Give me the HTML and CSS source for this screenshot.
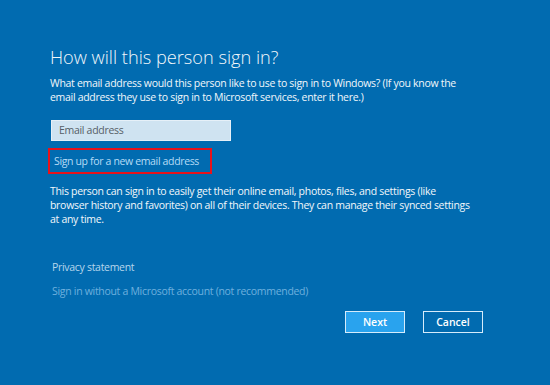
FILE: index.html
```html
<!DOCTYPE html>
<html>
<head>
<meta charset="utf-8">
<link rel="stylesheet" href="styles.css">
</head>
<body>
<div class="page">
  <h1 class="title">How will this person sign in?</h1>
  <p class="intro">What email address would this person like to use to sign in to Windows? (If you know the<br>email address they use to sign in to Microsoft services, enter it here.)</p>
  <div class="input">Email address</div>
  <div class="signup"><span class="link">Sign up for a new email address</span></div>
  <p class="info">This person can sign in to easily get their online email, photos, files, and settings (like browser history and favorites) on all of their devices. They can manage their synced settings at any time.</p>
  <div class="privacy">Privacy statement</div>
  <div class="without">Sign in without a Microsoft account (not recommended)</div>
  <div class="buttons">
    <div class="btn next">Next</div>
    <div class="btn cancel">Cancel</div>
  </div>
</div>
</body>
</html>
```
FILE: styles.css
```css
html, body {
  margin: 0;
  padding: 0;
  background: #016bb0;
  width: 550px;
  height: 385px;
  overflow: hidden;
}
.page {
  padding: 44px 0 0 50px;
  font-family: "Open Sans", "Noto Sans", sans-serif;
  color: #ffffff;
  display: flex;
  flex-direction: column;
  align-items: flex-start;
}
.title {
  margin: 0;
  font-weight: 300;
  font-size: 18.2px;
  line-height: 26px;
  color: #f2f7fb;
}
.intro {
  margin: 6px 0 0 0;
  font-size: 10.5px;
  letter-spacing: -0.3px;
  line-height: 14px;
  width: 450px;
  color: #f2f7fb;
}
.input {
  margin-top: 16px;
  margin-left: 1px;
  width: 180px;
  height: 21px;
  box-sizing: border-box;
  padding: 0 7px;
  background: #cfe3f1;
  border: 1px solid #e6f0f8;
  color: #555e66;
  font-size: 10.5px;
  letter-spacing: -0.3px;
  line-height: 19px;
}
.signup {
  margin-top: 7px;
  margin-left: -2px;
  width: 164px;
  height: 26px;
  box-sizing: border-box;
  border: 2px solid #e8131b;
  padding-left: 4px;
  display: flex;
  align-items: center;
}
.link {
  color: #b5dbf6;
  font-size: 10.5px;
  letter-spacing: -0.35px;
}
.info {
  margin: 10px 0 0 0;
  font-size: 10.5px;
  letter-spacing: -0.3px;
  line-height: 14px;
  width: 424px;
  color: #f2f7fb;
}
.privacy {
  margin-top: 34px;
  margin-left: 2px;
  font-size: 10.5px;
  letter-spacing: -0.3px;
  color: #b7d6ec;
}
.without {
  margin-top: 10px;
  margin-left: 2px;
  font-size: 10.5px;
  letter-spacing: -0.3px;
  color: #6eb0de;
}
.buttons {
  margin-top: 13px;
  margin-left: 295px;
  display: flex;
  gap: 18px;
}
.btn {
  width: 60px;
  height: 22px;
  box-sizing: border-box;
  border: 1px solid #d6ecfb;
  font-size: 10.5px;
  font-weight: 600;
  display: flex;
  align-items: center;
  justify-content: center;
  color: #ffffff;
}
.next {
  background: #29a3ee;
}
.cancel {
  background: #016bb0;
}
```
